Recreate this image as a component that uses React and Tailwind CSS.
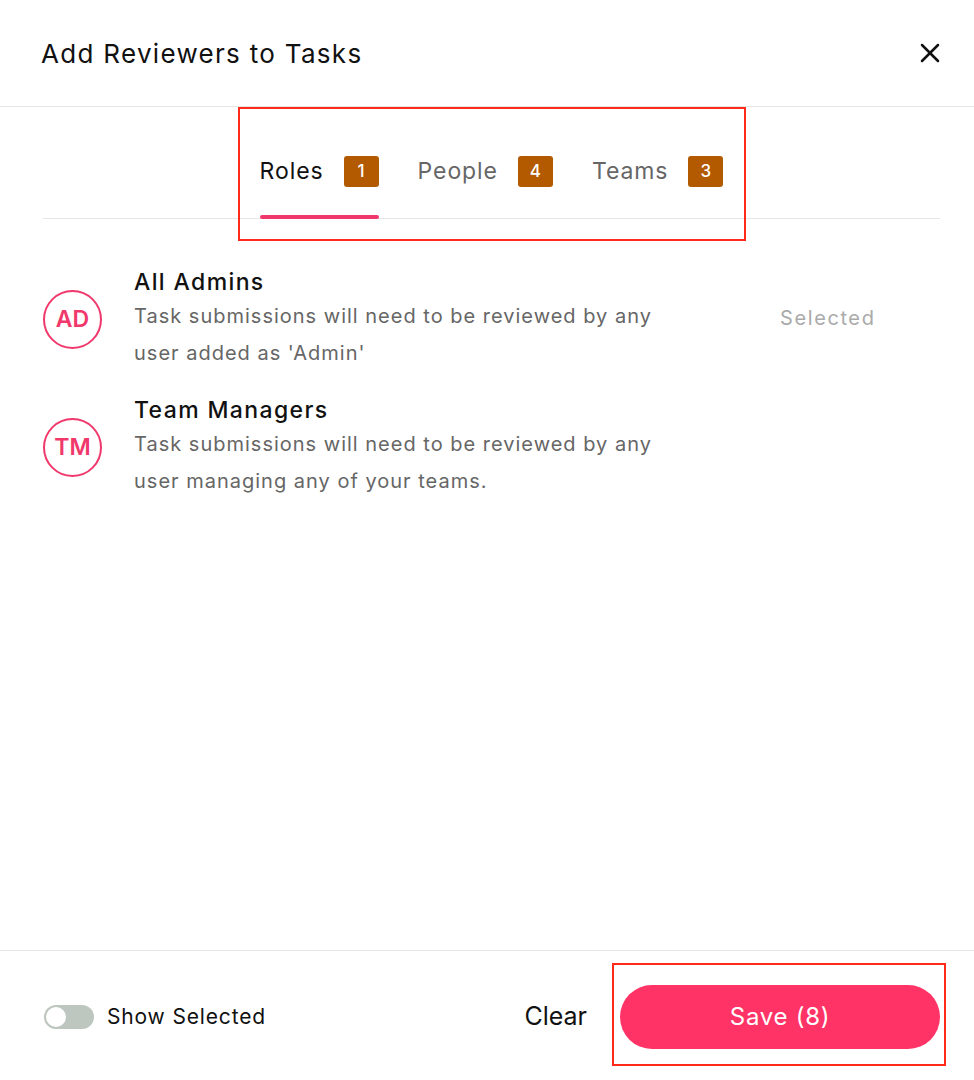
import { X } from 'lucide-react'

const tabs = [
  { label: 'Roles', count: 1, active: true },
  { label: 'People', count: 4 },
  { label: 'Teams', count: 3 },
]

const roles = [
  {
    initials: 'AD',
    title: 'All Admins',
    text: "Task submissions will need to be reviewed by any user added as 'Admin'",
    selected: true,
  },
  {
    initials: 'TM',
    title: 'Team Managers',
    text: 'Task submissions will need to be reviewed by any user managing any of your teams.',
  },
]

function Tab({ label, count, active }) {
  return (
    <div className="flex flex-col">
      <div className="flex h-[31px] items-center gap-[20px]">
        <span className={`text-[23px] tracking-[0.04em] ${active ? 'text-[#111]' : 'text-[#666]'}`}>{label}</span>
        <span className="flex h-[31px] w-[35px] items-center justify-center rounded-[3px] bg-[#b35900] text-[17px] font-medium text-white">
          {count}
        </span>
      </div>
      <div className={`mt-[28px] h-[4px] rounded-full ${active ? 'bg-[#f0386b]' : 'bg-transparent'}`} />
    </div>
  )
}

function RoleRow({ initials, title, text, selected }) {
  return (
    <div className="flex items-center">
      <div className="flex h-[59px] w-[59px] shrink-0 items-center justify-center rounded-full border-2 border-[#f0386b] text-[23px] font-semibold text-[#f0386b]">
        {initials}
      </div>
      <div className="ml-[32px] w-[560px]">
        <p className="text-[23px] font-medium leading-[31px] tracking-[0.06em] text-[#111]">{title}</p>
        <p className="text-[20px] leading-[37px] tracking-[0.05em] text-[#666]">{text}</p>
      </div>
      {selected && <span className="mb-[4px] ml-[86px] text-[20px] tracking-[0.08em] text-[#aaa]">Selected</span>}
    </div>
  )
}

export default function App() {
  return (
    <div className="relative flex h-[1080px] flex-col bg-white" style={{ fontFamily: 'Inter, "Noto Sans", sans-serif' }}>
      <header className="flex h-[107px] shrink-0 items-center justify-between border-b border-[#e6e6e6] pl-[41px] pr-[28px]">
        <h1 className="text-[26px] tracking-[0.05em] text-[#111]">Add Reviewers to Tasks</h1>
        <X className="h-[32px] w-[32px] text-[#111]" strokeWidth={1.9} />
      </header>

      <div className="ml-[43px] mr-[34px] flex justify-center gap-[39px] border-b border-[#e6e6e6] pt-[49px]">
        {tabs.map((t) => (
          <div key={t.label} className="-mb-px">
            <Tab {...t} />
          </div>
        ))}
      </div>

      <div className="flex flex-1 flex-col gap-[23px] pl-[43px] pt-[48px]">
        {roles.map((r) => (
          <RoleRow key={r.initials} {...r} />
        ))}
      </div>

      <footer className="flex h-[130px] shrink-0 items-center border-t border-[#e6e6e6] pl-[44px] pr-[34px] pt-[3px]">
        <div className="flex h-[24px] w-[50px] items-center rounded-full bg-[#bdc6bf] px-[2px]">
          <div className="h-[20px] w-[20px] rounded-full bg-white" />
        </div>
        <span className="ml-[13px] text-[21px] tracking-[0.04em] text-[#111]">Show Selected</span>
        <span className="ml-auto text-[25px] text-[#111]">Clear</span>
        <button className="ml-[33px] flex h-[64px] w-[320px] items-center justify-center rounded-full bg-[#ff3366] text-[24px] tracking-[0.03em] text-white">
          Save (8)
        </button>
      </footer>

      <div className="pointer-events-none absolute left-[238px] top-[107px] h-[134px] w-[508px] border-2 border-[#ff2a1a]" />
      <div className="pointer-events-none absolute left-[612px] top-[963px] h-[103px] w-[334px] border-2 border-[#ff2a1a]" />
    </div>
  )
}
